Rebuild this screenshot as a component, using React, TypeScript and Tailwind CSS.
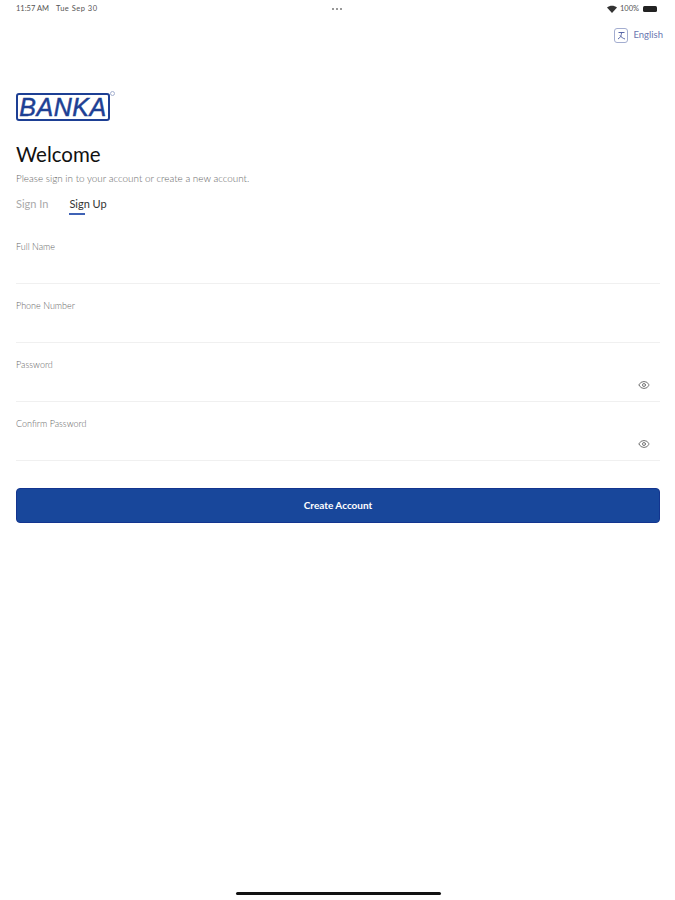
import React from "react";
import { Eye } from "lucide-react";

const fields = [
  { label: "Full Name", secret: false },
  { label: "Phone Number", secret: false },
  { label: "Password", secret: true },
  { label: "Confirm Password", secret: true },
];

const StatusBar: React.FC = () => (
  <div className="flex h-4 items-center justify-between pl-4 pr-[18px] pt-[2px] text-[7.5px] text-[#555]">
    <div className="flex w-[120px] gap-[7px]">
      <span>11:57 AM</span>
      <span className="tracking-[0.5px]">Tue Sep 30</span>
    </div>
    <div className="flex gap-[2px]">
      <span className="h-[2px] w-[2px] rounded-full bg-[#777]"></span>
      <span className="h-[2px] w-[2px] rounded-full bg-[#777]"></span>
      <span className="h-[2px] w-[2px] rounded-full bg-[#777]"></span>
    </div>
    <div className="flex w-[120px] items-center justify-end gap-[3px]">
      <svg width="10" height="8" viewBox="0 0 10 8">
        <path d="M0 2.6C2.8 0 7.2 0 10 2.6L5 8Z" fill="#333" />
      </svg>
      <span>100%</span>
      <span className="ml-[1px] h-[6px] w-[14px] rounded-[1.5px] bg-[#222]"></span>
    </div>
  </div>
);

const Logo: React.FC = () => (
  <div className="relative h-[28px] w-[94px]">
    <div className="flex h-[28px] w-[94px] items-center justify-center rounded-[3px] border-2 border-[#1d3f94]">
      <span className="text-[25px] font-normal italic leading-none tracking-[0.5px] text-[#1d3f94] [-webkit-text-stroke:0.5px_#1d3f94] [font-family:'Liberation_Sans',sans-serif]">
        BANKA
      </span>
    </div>
    <span className="absolute -right-[5px] -top-[2px] h-[5px] w-[5px] rounded-full border border-[#a5b1d0]"></span>
  </div>
);

const App: React.FC = () => {
  return (
    <div className="flex h-[900px] w-[675px] flex-col overflow-hidden bg-white [font-family:Lato,sans-serif]">
      <StatusBar />

      <div className="flex justify-end pr-3 pt-[12px]">
        <div className="flex items-center gap-[5px] text-[9.5px] text-[#6a76b0]">
          <div className="flex h-[15px] w-[14px] items-center justify-center rounded-[3px] border border-[#a3add0]">
            <svg width="9" height="9" viewBox="0 0 9 9" fill="none" stroke="#5a68a8" strokeWidth="1">
              <path d="M1.5 1.5H7.5M4.5 1.5C4.5 4.5 3.5 6.5 1 8M3 4.5C4.2 6 6 7.4 8 8" />
            </svg>
          </div>
          <span>English</span>
        </div>
      </div>

      <div className="flex flex-1 flex-col pl-4 pr-[15px] pt-[50px]">
        <Logo />

        <h1 className="mt-[20px] text-[20.5px] font-normal leading-[26px] text-[#111]">Welcome</h1>
        <p className="mt-[5px] text-[9.9px] font-light leading-[12px] text-[#666]">
          Please sign in to your account or create a new account.
        </p>

        <div className="mt-[13px] flex gap-[21px] text-[11px] leading-[14px]">
          <span className="text-[#aaa]">Sign In</span>
          <div className="flex flex-col items-start">
            <span className="text-[#333]">Sign Up</span>
            <span className="mt-[2px] h-[1.5px] w-[16px] bg-[#3f62b5]"></span>
          </div>
        </div>

        <div className="mt-[10px] flex flex-col">
          {fields.map((field) => (
            <div
              key={field.label}
              className="flex h-[59px] flex-col border-b border-[#f0f0f0] pt-[16px]"
            >
              <span className="text-[9px] font-light leading-[11px] text-[#666]">{field.label}</span>
              {field.secret && (
                <div className="mt-[9px] flex justify-end pr-[10px]">
                  <Eye size={12} strokeWidth={2} color="#777" />
                </div>
              )}
            </div>
          ))}
        </div>

        <button className="mt-[27px] flex h-[35px] w-full items-center justify-center rounded-[4px] border border-[#13358f] bg-[#18479b] text-[10px] font-bold text-white">
          Create Account
        </button>

        <div className="mt-auto flex justify-center pb-[5px]">
          <span className="h-[3px] w-[205px] rounded-full bg-[#111]"></span>
        </div>
      </div>
    </div>
  );
};

export default App;
